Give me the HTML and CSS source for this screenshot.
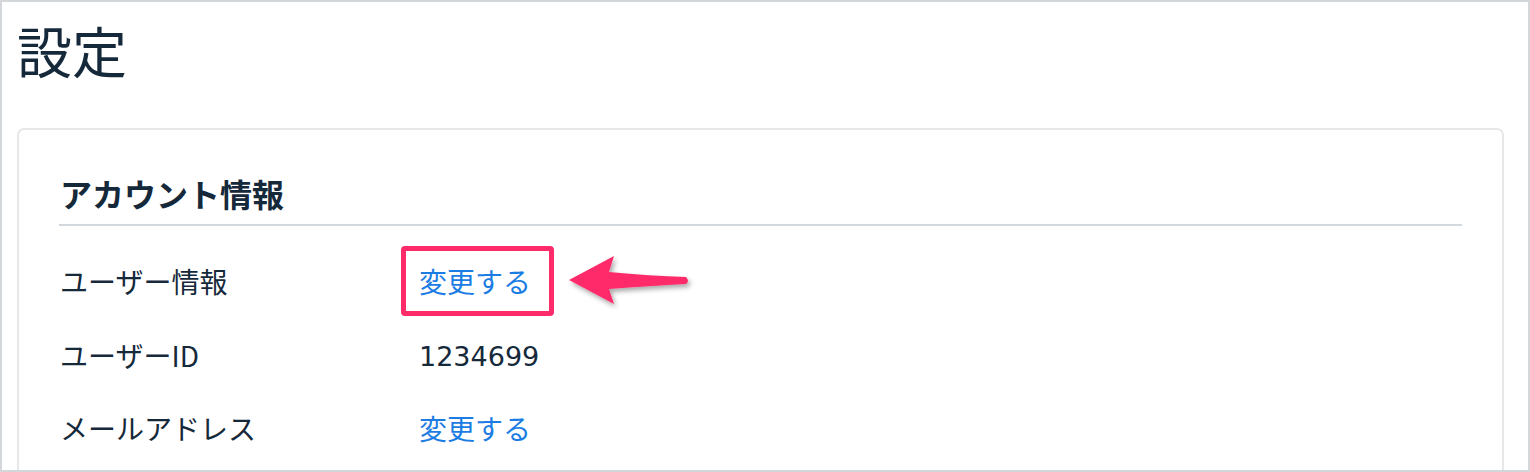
FILE: index.html
```html
<!DOCTYPE html>
<html lang="ja">
<head>
<meta charset="utf-8">
<link rel="stylesheet" href="styles.css">
</head>
<body>
<div class="frame">
  <h1 class="title">設定</h1>
  <section class="card">
    <h2 class="card-title">アカウント情報</h2>
    <div class="rows">
      <div class="row">
        <div class="label">ユーザー情報</div>
        <div class="value">
          <a class="link highlighted" href="#">変更する</a>
          <svg class="arrow" width="140" height="70" viewBox="0 0 140 70">
            <defs>
              <filter id="sh" x="-20%" y="-40%" width="140%" height="180%">
                <feDropShadow dx="2" dy="3" stdDeviation="2.5" flood-color="#000" flood-opacity="0.35"/>
              </filter>
            </defs>
            <path filter="url(#sh)" fill="#fe2b6a" d="M7 34 L52 10 L47 26 Q88 30 124 31 Q128 35 124 38 Q88 40 47 43 L52 58 Z"/>
          </svg>
        </div>
      </div>
      <div class="row">
        <div class="label">ユーザーID</div>
        <div class="value num">1234699</div>
      </div>
      <div class="row">
        <div class="label">メールアドレス</div>
        <div class="value"><a class="link" href="#">変更する</a></div>
      </div>
    </div>
  </section>
</div>
</body>
</html>
```

FILE: styles.css
```css
* { box-sizing: border-box; }
html, body { margin: 0; padding: 0; background: #fff; }
body {
  font-family: "Noto Sans CJK JP", "Noto Sans", sans-serif;
  color: #15293a;
}
.frame {
  width: 1530px;
  height: 472px;
  border: 2px solid #d3d7da;
  overflow: hidden;
  padding: 0 24px 0 15px;
}
.title {
  margin: 0;
  padding-top: 16px;
  font-size: 55px;
  line-height: 62px;
  font-weight: 400;
}
.card {
  margin-top: 48px;
  border: 2px solid #e5e7e8;
  border-radius: 7px;
  padding: 0 40px;
  height: 500px;
}
.card-title {
  margin: 0;
  padding-top: 43px;
  font-size: 32px;
  line-height: 40px;
  font-weight: 700;
  padding-left: 1px;
  padding-bottom: 11px;
  border-bottom: 2px solid #d2d8db;
}
.rows {
  display: flex;
  flex-direction: column;
  padding-top: 37px;
  gap: 35px;
}
.row {
  display: flex;
  align-items: center;
  font-size: 28px;
  line-height: 37px;
}
.label {
  width: 360px;
  padding-left: 1px;
}
.value {
  position: relative;
  display: flex;
  align-items: center;
}
.num {
  font-family: "DejaVu Sans", sans-serif;
  font-size: 27px;
  padding-top: 3px;
}
.link {
  display: inline-block;
  color: #1b7de3;
  text-decoration: none;
  position: relative;
}
.highlighted::after {
  content: "";
  position: absolute;
  left: -18px;
  right: -23px;
  top: -17px;
  bottom: -16px;
  border: 5px solid #fe2b6a;
  border-radius: 4px;
}
.arrow {
  position: absolute;
  left: 143px;
  top: -17px;
}
```
